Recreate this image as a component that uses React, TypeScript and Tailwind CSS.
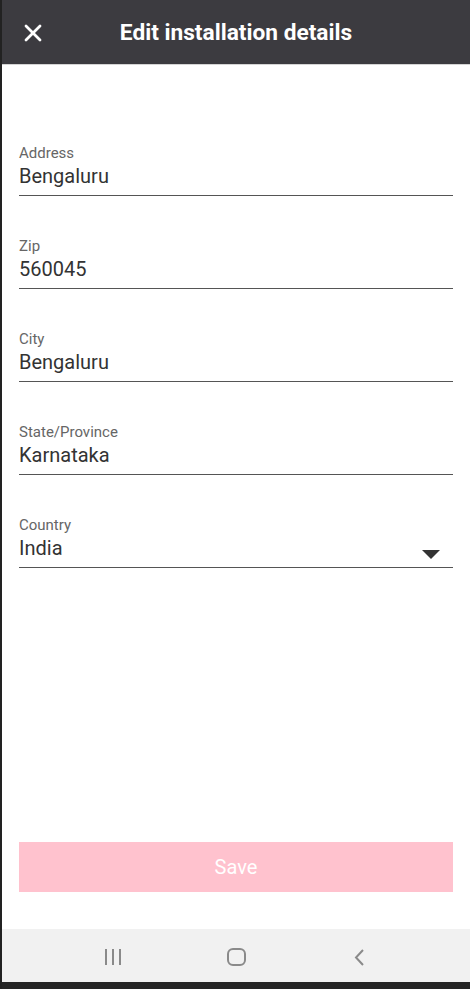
import { X } from "lucide-react";

const fields = [
  { label: "Address", value: "Bengaluru" },
  { label: "Zip", value: "560045" },
  { label: "City", value: "Bengaluru" },
  { label: "State/Province", value: "Karnataka" },
];

const Field = ({
  label,
  value,
  select,
}: {
  label: string;
  value: string;
  select?: boolean;
}) => (
  <div className="border-b border-[#555]">
    <div className="text-[15px] leading-[16px] text-[#666]">{label}</div>
    <div className="mt-[3px] pb-[7px] flex items-center justify-between">
      <span className="text-[20px] leading-[24px] text-[#333]">{value}</span>
      {select && (
        <svg width="18" height="9" viewBox="0 0 18 9" className="mr-[13px] mt-[12px]">
          <path d="M0 0 L18 0 L9 9 Z" fill="#333" />
        </svg>
      )}
    </div>
  </div>
);

const App = () => {
  return (
    <div
      className="w-[470px] h-[989px] flex flex-col bg-white border-l-2 border-[#222]"
      style={{ fontFamily: "Roboto, 'Liberation Sans', sans-serif" }}
    >
      <header className="h-[65px] shrink-0 grid grid-cols-[62px_1fr_62px] items-center bg-[#3c3b40] border-b border-[#d4d4d4]">
        <div className="flex justify-center">
          <X size={28} strokeWidth={2.4} color="#ffffff" className="mt-[2px]" />
        </div>
        <h1 className="text-center text-[22.7px] font-bold text-white leading-none mt-[2px]">
          Edit installation details
        </h1>
        <div />
      </header>

      <main className="flex-1 flex flex-col px-[17px] pt-[80px]">
        <div className="flex flex-col gap-[42px]">
          {fields.map((f) => (
            <Field key={f.label} label={f.label} value={f.value} />
          ))}
          <Field label="Country" value="India" select />
        </div>
        <div className="mt-auto mb-[37px]">
          <button className="w-full h-[50px] bg-[#ffc2ce] text-white text-[20px]">
            Save
          </button>
        </div>
      </main>

      <nav className="h-[53px] shrink-0 bg-[#f1f1f1] flex justify-center items-center pt-[3px]">
        <div className="w-[123px] flex justify-center">
          <div className="flex gap-[5px] h-[16px]">
            <span className="w-[2px] h-full bg-[#8a8a8a]" />
            <span className="w-[2px] h-full bg-[#8a8a8a]" />
            <span className="w-[2px] h-full bg-[#8a8a8a]" />
          </div>
        </div>
        <div className="w-[123px] flex justify-center">
          <div className="w-[19px] h-[18px] rounded-[6px] border-2 border-[#8a8a8a]" />
        </div>
        <div className="w-[123px] flex justify-center">
          <svg width="10" height="17" viewBox="0 0 10 17">
            <path d="M9 1 L2 8.5 L9 16" fill="none" stroke="#8a8a8a" strokeWidth="2" />
          </svg>
        </div>
      </nav>
      <div className="h-[7px] shrink-0 bg-[#252525]" />
    </div>
  );
};

export default App;
